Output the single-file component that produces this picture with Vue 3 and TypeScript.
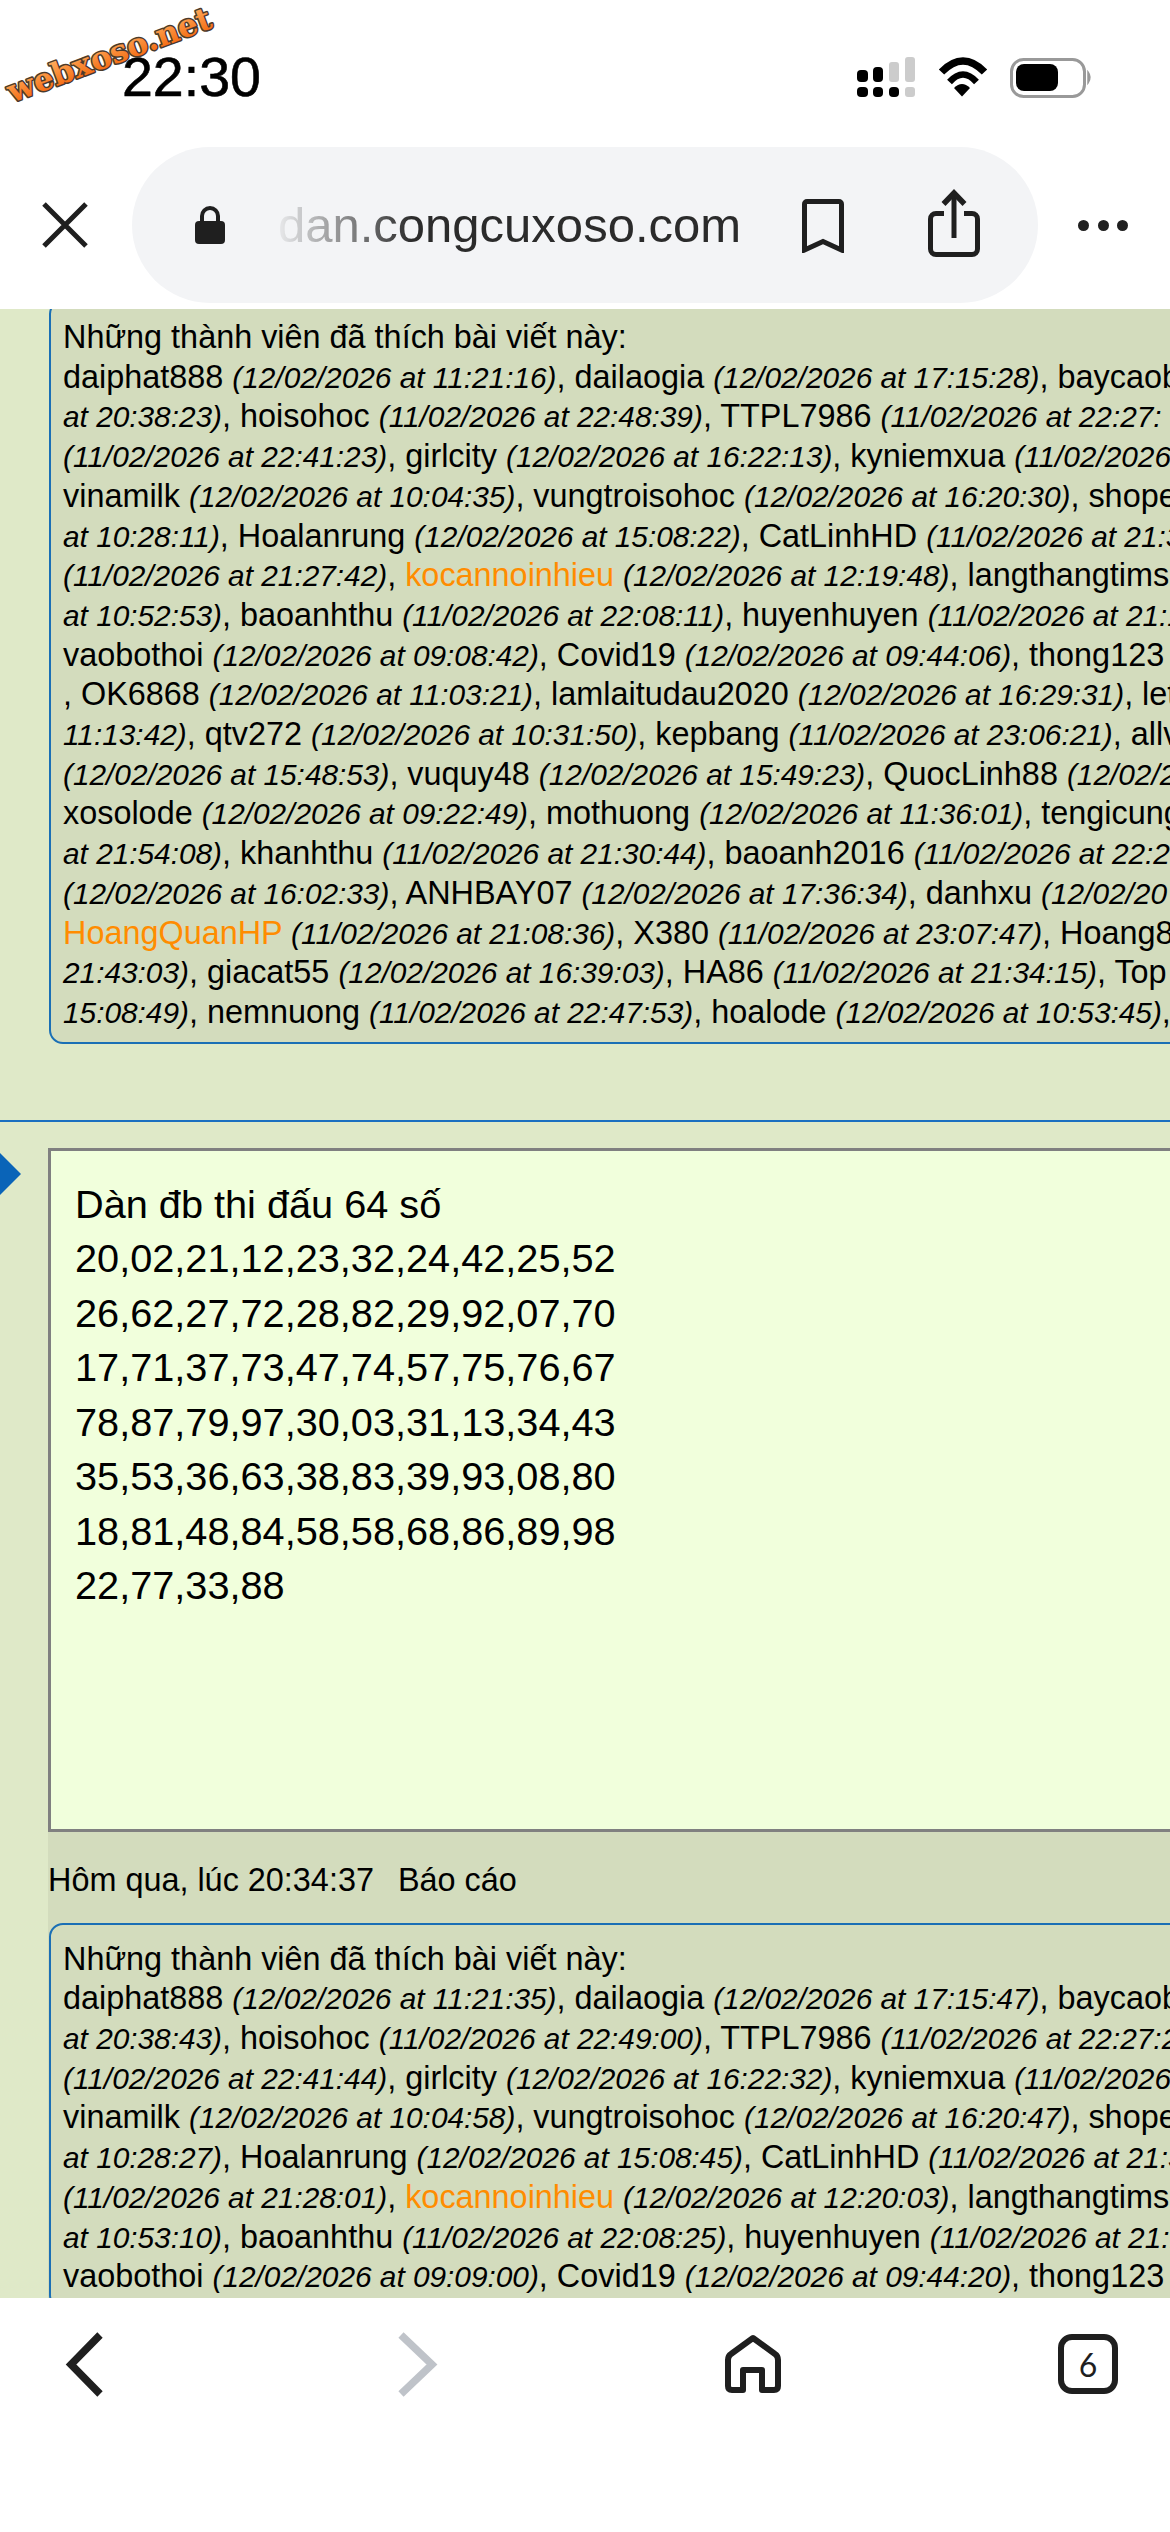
<template>
  <div class="phone">
    <svg class="watermark" width="240" height="120" viewBox="0 0 240 120">
      <defs>
        <linearGradient id="wm" x1="0" y1="0" x2="0" y2="1">
          <stop offset="0.1" stop-color="#ffb060" />
          <stop offset="0.9" stop-color="#f4680f" />
        </linearGradient>
      </defs>
      <text x="0" y="0" transform="translate(113 65) rotate(-20.5)" text-anchor="middle" fill="url(#wm)" stroke="#4a3a2c" stroke-width="3" paint-order="stroke" stroke-linejoin="round">webxoso.net</text>
    </svg>

    <header class="top">
      <div class="status">
        <span class="time">22:30</span>
        <svg class="status-icons" width="236" height="42" viewBox="856 56 236 42">
          <g fill="#000">
            <rect x="856" y="70" width="11" height="12" rx="4" />
            <rect x="872" y="67" width="10" height="15" rx="4" />
            <rect x="856" y="87" width="11" height="10" rx="4" />
            <rect x="872" y="87" width="10" height="10" rx="4" />
            <rect x="888" y="87" width="10" height="10" rx="4" />
          </g>
          <g fill="#cccccc">
            <rect x="888" y="62" width="10" height="20" rx="3" />
            <rect x="904" y="57" width="10" height="25" rx="3" />
            <rect x="904" y="87" width="10" height="10" rx="3" />
          </g>
          <path d="M940.5 72 Q962 50 983.5 72" fill="none" stroke="#000" stroke-width="7.5" />
          <path d="M948.5 82 Q962 67 975.5 82" fill="none" stroke="#000" stroke-width="6.5" />
          <path d="M953 88 Q961 80 969 88 L961 96.5 Z" fill="#000" />
          <rect x="1010.5" y="59.5" width="73" height="37" rx="12" fill="none" stroke="#999" stroke-width="3" />
          <rect x="1015" y="64" width="42" height="27" rx="8" fill="#000" />
          <path d="M1087 72 Q1091 77.5 1087 83 Z" fill="#999" stroke="#999" stroke-width="1.5" />
        </svg>
      </div>

      <div class="toolbar">
        <svg class="close" width="46" height="46" viewBox="0 0 46 46">
          <path d="M2 2 L44 44 M44 2 L2 44" stroke="#1f1f1f" stroke-width="5" />
        </svg>
        <div class="pill">
          <svg class="lock" width="30" height="38" viewBox="0 0 30 38">
            <path d="M7 17 V10 a8 8 0 0 1 16 0 V17" fill="none" stroke="#1f1f1f" stroke-width="4" />
            <rect x="0" y="15" width="30" height="23" rx="4" fill="#1f1f1f" />
          </svg>
          <span class="url">dan.congcuxoso.com</span>
          <svg class="bookmark" width="42" height="54" viewBox="801 198 42 54">
            <path d="M803.5 249 V203 a2.5 2.5 0 0 1 2.5 -2.5 H838 a2.5 2.5 0 0 1 2.5 2.5 V249 L822 240.5 Z" fill="none" stroke="#1f1f1f" stroke-width="5" />
          </svg>
          <svg class="share" width="52" height="69" viewBox="927 191 52 69">
            <path d="M943 215.5 H935 a5.5 5.5 0 0 0 -5.5 5.5 V251 a5.5 5.5 0 0 0 5.5 5.5 H971 a5.5 5.5 0 0 0 5.5 -5.5 V221 a5.5 5.5 0 0 0 -5.5 -5.5 H963" fill="none" stroke="#1f1f1f" stroke-width="5" />
            <path d="M953 240 V195" fill="none" stroke="#1f1f1f" stroke-width="5" />
            <path d="M942.5 206 L953 195 L963.5 206" fill="none" stroke="#1f1f1f" stroke-width="5.5" />
          </svg>
        </div>
        <div class="dots"><i></i><i></i><i></i></div>
      </div>
    </header>

    <main class="content">
      <section class="likes first">
        <div class="line">Những thành viên đã thích bài viết này:</div>
        <div v-for="(line, i) in firstLikes" :key="i" class="line"><span v-for="(seg, j) in parseLine(line)" :key="j" :class="seg.cls">{{ seg.text }}</span></div>
      </section>

      <div class="divider"></div>

      <article class="post">
        <span class="arrow"></span>
        <div class="message">
          <div v-for="row in messageLines" :key="row">{{ row }}</div>
        </div>
        <div class="post-footer">
          <div class="meta">Hôm qua, lúc 20:34:37<span class="report">Báo cáo</span></div>
          <section class="likes">
            <div class="line">Những thành viên đã thích bài viết này:</div>
            <div v-for="(line, i) in secondLikes" :key="i" class="line"><span v-for="(seg, j) in parseLine(line)" :key="j" :class="seg.cls">{{ seg.text }}</span></div>
          </section>
        </div>
      </article>
    </main>

    <nav class="bottom">
      <svg width="60" height="70" viewBox="0 0 60 70">
        <path d="M46 7 L17 36.5 L46 66" transform="translate(2 0)" fill="none" stroke="#1f1f1f" stroke-width="7.5" />
      </svg>
      <svg width="60" height="70" viewBox="0 0 60 70">
        <path d="M15 7 L46 36.5 L15 66" transform="translate(-1 0)" fill="none" stroke="#bfc3c9" stroke-width="7.5" />
      </svg>
      <svg width="60" height="70" viewBox="0 0 60 70">
        <path d="M30 10 L8 26 Q5 28 5 32 V58 Q5 62 9 62 H20 V42 H39 V62 H51 Q55 62 55 58 V32 Q55 28 52 26 Z" fill="none" stroke="#1f1f1f" stroke-width="6" stroke-linejoin="round" />
      </svg>
      <div class="tabs">6</div>
    </nav>
  </div>
</template>

<script setup lang="ts">
type Segment = { text: string; cls: string };

// *...* is the italic timestamp, #...# an orange member name
function parseLine(line: string): Segment[] {
  return line
    .split(/(\*[^*]*\*|#[^#]*#)/)
    .filter((part) => part.length > 0)
    .map((part) => {
      if (part[0] === "*") return { text: part.slice(1, -1), cls: "stamp" };
      if (part[0] === "#") return { text: part.slice(1, -1), cls: "vip" };
      return { text: part, cls: "" };
    });
}

const firstLikes = [
  "daiphat888 *(12/02/2026 at 11:21:16)*, dailaogia *(12/02/2026 at 17:15:28)*, baycaobac",
  "*at 20:38:23)*, hoisohoc *(11/02/2026 at 22:48:39)*, TTPL7986 *(11/02/2026 at 22:27:*",
  "*(11/02/2026 at 22:41:23)*, girlcity *(12/02/2026 at 16:22:13)*, kyniemxua *(11/02/2026*",
  "vinamilk *(12/02/2026 at 10:04:35)*, vungtroisohoc *(12/02/2026 at 16:20:30)*, shopee",
  "*at 10:28:11)*, Hoalanrung *(12/02/2026 at 15:08:22)*, CatLinhHD *(11/02/2026 at 21:3*",
  "*(11/02/2026 at 21:27:42)*, #kocannoinhieu# *(12/02/2026 at 12:19:48)*, langthangtims",
  "*at 10:52:53)*, baoanhthu *(11/02/2026 at 22:08:11)*, huyenhuyen *(11/02/2026 at 21:1*",
  "vaobothoi *(12/02/2026 at 09:08:42)*, Covid19 *(12/02/2026 at 09:44:06)*, thong123",
  ", OK6868 *(12/02/2026 at 11:03:21)*, lamlaitudau2020 *(12/02/2026 at 16:29:31)*, let",
  "*11:13:42)*, qtv272 *(12/02/2026 at 10:31:50)*, kepbang *(11/02/2026 at 23:06:21)*, allv",
  "*(12/02/2026 at 15:48:53)*, vuquy48 *(12/02/2026 at 15:49:23)*, QuocLinh88 *(12/02/2*",
  "xosolode *(12/02/2026 at 09:22:49)*, mothuong *(12/02/2026 at 11:36:01)*, tengicung",
  "*at 21:54:08)*, khanhthu *(11/02/2026 at 21:30:44)*, baoanh2016 *(11/02/2026 at 22:2*",
  "*(12/02/2026 at 16:02:33)*, ANHBAY07 *(12/02/2026 at 17:36:34)*, danhxu *(12/02/20*",
  "#HoangQuanHP# *(11/02/2026 at 21:08:36)*, X380 *(11/02/2026 at 23:07:47)*, Hoang8",
  "*21:43:03)*, giacat55 *(12/02/2026 at 16:39:03)*, HA86 *(11/02/2026 at 21:34:15)*, Top",
  "*15:08:49)*, nemnuong *(11/02/2026 at 22:47:53)*, hoalode *(12/02/2026 at 10:53:45)*,",
];

const secondLikes = [
  "daiphat888 *(12/02/2026 at 11:21:35)*, dailaogia *(12/02/2026 at 17:15:47)*, baycaobac",
  "*at 20:38:43)*, hoisohoc *(11/02/2026 at 22:49:00)*, TTPL7986 *(11/02/2026 at 22:27:2*",
  "*(11/02/2026 at 22:41:44)*, girlcity *(12/02/2026 at 16:22:32)*, kyniemxua *(11/02/2026*",
  "vinamilk *(12/02/2026 at 10:04:58)*, vungtroisohoc *(12/02/2026 at 16:20:47)*, shopee",
  "*at 10:28:27)*, Hoalanrung *(12/02/2026 at 15:08:45)*, CatLinhHD *(11/02/2026 at 21:3*",
  "*(11/02/2026 at 21:28:01)*, #kocannoinhieu# *(12/02/2026 at 12:20:03)*, langthangtims",
  "*at 10:53:10)*, baoanhthu *(11/02/2026 at 22:08:25)*, huyenhuyen *(11/02/2026 at 21:1*",
  "vaobothoi *(12/02/2026 at 09:09:00)*, Covid19 *(12/02/2026 at 09:44:20)*, thong123",
];

const messageLines = [
  "Dàn đb thi đấu 64 số",
  "20,02,21,12,23,32,24,42,25,52",
  "26,62,27,72,28,82,29,92,07,70",
  "17,71,37,73,47,74,57,75,76,67",
  "78,87,79,97,30,03,31,13,34,43",
  "35,53,36,63,38,83,39,93,08,80",
  "18,81,48,84,58,58,68,86,89,98",
  "22,77,33,88",
];
</script>

<style>
html,
body {
  margin: 0;
  background: #fff;
}
</style>

<style scoped>
.phone {
  position: relative;
  width: 1170px;
  height: 2532px;
  display: flex;
  flex-direction: column;
  overflow: hidden;
  background: #fff;
  color: #000;
  font-family: "Liberation Sans", Arial, sans-serif;
}

.watermark {
  position: absolute;
  left: 0;
  top: 0;
  z-index: 5;
  font-family: "DejaVu Serif", serif;
  font-weight: 700;
  font-size: 31.5px;
}

.top {
  flex: none;
  height: 309px;
}

.status {
  height: 147px;
  display: flex;
  align-items: flex-start;
}

.time {
  margin: 47px 0 0 122px;
  font-size: 55.5px;
  line-height: 60px;
  -webkit-text-stroke: 0.6px #000;
}

.status-icons {
  margin: 56px 77px 0 auto;
}

.toolbar {
  height: 156px;
  display: flex;
  align-items: center;
}

.close {
  margin-left: 42px;
  margin-right: 44px;
  flex: none;
}

.pill {
  width: 906px;
  height: 156px;
  flex: none;
  display: flex;
  align-items: center;
  border-radius: 78px;
  background: #f3f4f6;
}

.lock {
  margin-left: 63px;
  margin-top: -1px;
  flex: none;
}

.url {
  width: 471px;
  margin-left: 53px;
  flex: none;
  font-size: 49px;
  line-height: 56px;
  white-space: nowrap;
  color: #2b2b2b;
  -webkit-mask-image: linear-gradient(90deg, rgba(0, 0, 0, 0.05) 0, #000 135px);
  mask-image: linear-gradient(90deg, rgba(0, 0, 0, 0.05) 0, #000 135px);
}

.bookmark {
  margin-left: 53px;
  margin-top: 2px;
  flex: none;
}

.share {
  margin-left: 84px;
  margin-top: -3px;
  flex: none;
}

.dots {
  margin-left: 40px;
  display: flex;
  gap: 8.5px;
}

.dots i {
  width: 11px;
  height: 11px;
  border-radius: 50%;
  background: #1f1f1f;
}

.content {
  flex: 1;
  min-height: 0;
  overflow: hidden;
  background: #dfe9c8;
}

.likes {
  margin-left: 49px;
  margin-right: -30px;
  padding: 15px 0 10px 12px;
  border: 2px solid #1a6fb5;
  border-radius: 14px;
  background: #d3dcbd;
  font-size: 32.4px;
  line-height: 39.7px;
  white-space: pre;
}

.likes.first {
  margin-top: -9px;
  padding-top: 16px;
  padding-bottom: 9px;
}

.post-footer .likes {
  margin-left: 1px;
  margin-right: 0;
}

.stamp {
  font-size: 29.8px;
  font-style: italic;
}

.vip {
  color: #ff8c00;
}

.divider {
  height: 2px;
  margin-top: 76px;
  background: #1a6fc0;
}

.post {
  position: relative;
  padding: 26px 0 0 48px;
}

.arrow {
  position: absolute;
  left: 0;
  top: 31px;
  border-left: 21px solid #0a64b8;
  border-top: 21px solid transparent;
  border-bottom: 21px solid transparent;
}

.message {
  height: 684px;
  box-sizing: border-box;
  margin-right: -30px;
  padding: 26px 0 0 24px;
  border: 3px solid #808080;
  background: #f1ffdc;
  font-size: 39.7px;
  line-height: 54.5px;
  white-space: pre;
}

.post-footer {
  background: #d3dcbd;
  margin-right: -30px;
}

.meta {
  padding: 28px 0 23px;
  font-size: 32.4px;
  line-height: 40px;
  white-space: pre;
}

.report {
  margin-left: 24px;
}

.bottom {
  flex: none;
  height: 234px;
  box-sizing: border-box;
  display: flex;
  justify-content: space-between;
  align-items: flex-start;
  padding: 30px 52px 0;
  background: #fff;
}

.tabs {
  width: 60px;
  height: 60px;
  margin-top: 6px;
  box-sizing: border-box;
  display: flex;
  align-items: center;
  justify-content: center;
  border: 6px solid #1f1f1f;
  border-radius: 14px;
  font-family: Lato, sans-serif;
  font-size: 32px;
  color: #1f1f1f;
}
</style>
